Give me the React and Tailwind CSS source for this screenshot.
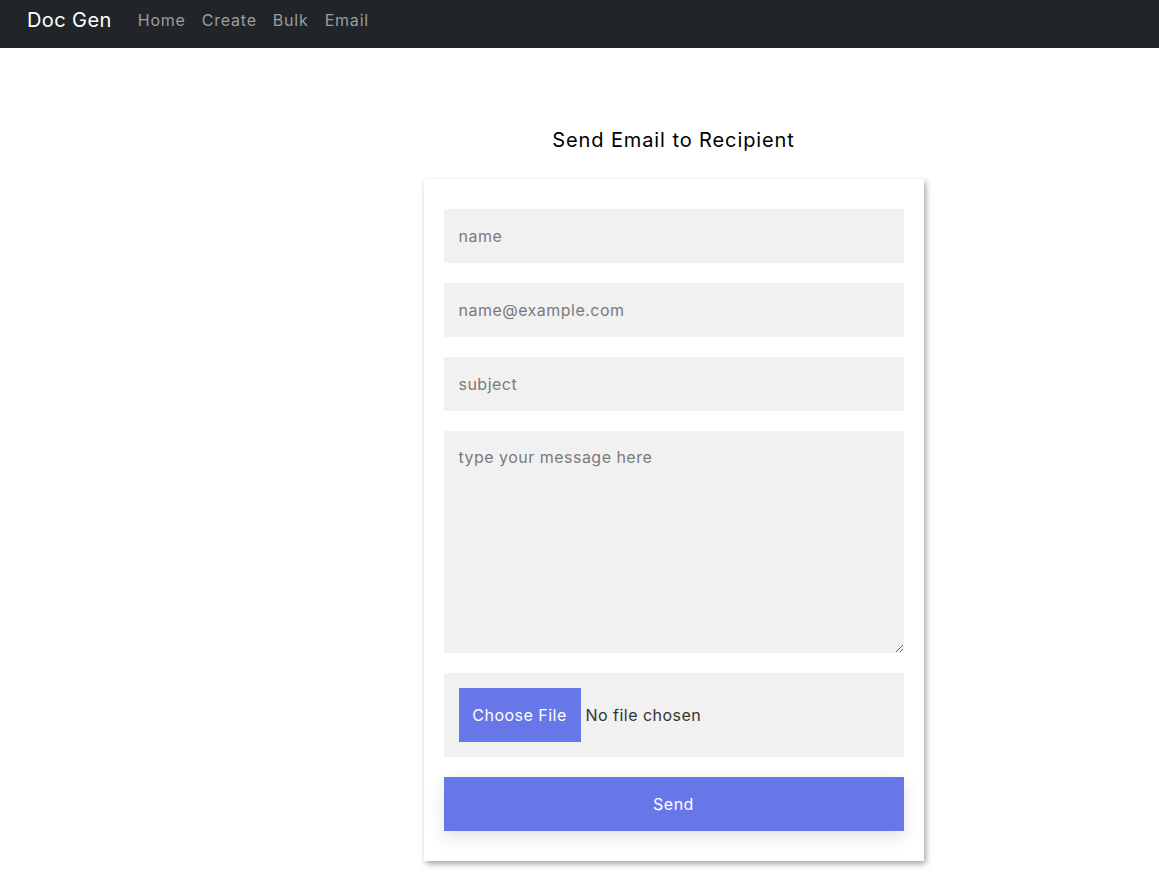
import React from 'react';

const links = ['Home', 'Create', 'Bulk', 'Email'];

const Field = ({ placeholder, type = 'text' }) => (
  <input
    type={type}
    placeholder={placeholder}
    className="w-full h-[54px] bg-[#f1f1f1] px-[15px] text-[16px] tracking-[0.03em] text-gray-800 placeholder:text-[#7a7a7a] outline-none"
  />
);

export default function App() {
  return (
    <div className="min-h-screen bg-white font-['Inter',sans-serif]">
      <nav className="h-12 bg-[#212529] flex items-center pb-2 px-[27px]">
        <span className="text-white text-[20px] tracking-[0.02em] mr-[26px]">Doc Gen</span>
        <div className="flex gap-4">
          {links.map((l) => (
            <a key={l} className="text-[16px] tracking-[0.05em] text-[#9b9d9f] cursor-pointer">
              {l}
            </a>
          ))}
        </div>
      </nav>

      <div className="flex flex-col items-center pl-[188px]">
        <h1 className="mt-[78px] text-[20px] leading-7 tracking-[0.045em] text-black">Send Email to Recipient</h1>
        <form className="mt-[25px] w-[500px] bg-white px-5 pt-[30px] pb-[30px] shadow-[2px_3px_6px_rgba(0,0,0,0.35)] flex flex-col gap-5">
          <Field placeholder="name" />
          <Field placeholder="name@example.com" type="email" />
          <Field placeholder="subject" />
          <textarea
            placeholder="type your message here"
            className="w-full h-[222px] bg-[#f1f1f1] px-[15px] py-[14px] text-[16px] tracking-[0.03em] placeholder:text-[#7a7a7a] outline-none"
          />
          <div className="h-[84px] bg-[#f1f1f1] flex items-center px-[15px]">
            <button type="button" className="h-[54px] w-[122px] bg-[#6777e8] text-white text-[16px] tracking-[0.03em]">
              Choose File
            </button>
            <span className="ml-[5px] text-[16px] tracking-[0.03em] text-[#333]">No file chosen</span>
          </div>
          <button
            type="button"
            className="h-[54px] w-full bg-[#6777e8] text-white text-[16px] tracking-[0.03em] shadow-[0_6px_16px_rgba(0,0,0,0.12)]"
          >
            Send
          </button>
        </form>
      </div>
    </div>
  );
}
